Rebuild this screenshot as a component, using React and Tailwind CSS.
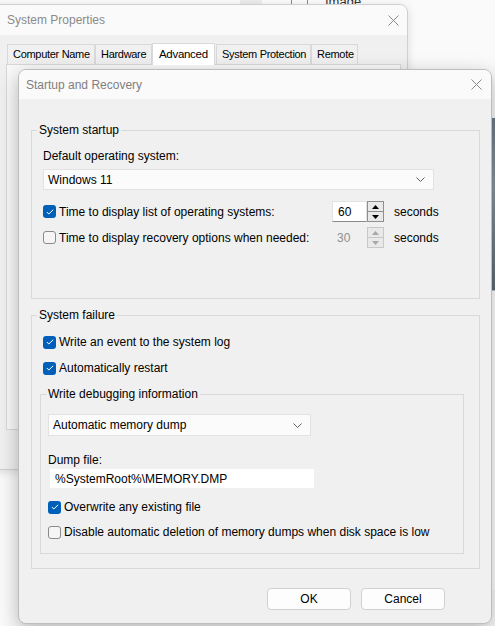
import React from "react";

function CloseX() {
  return (
    <svg width="11" height="11" viewBox="0 0 11 11" className="block">
      <path d="M0.5 0.5 L10.5 10.5 M10.5 0.5 L0.5 10.5" stroke="#8a8a8a" strokeWidth="1" fill="none" />
    </svg>
  );
}

function Chevron() {
  return (
    <svg width="9" height="5" viewBox="0 0 9 5" className="block">
      <path d="M0.5 0.5 L4.5 4.5 L8.5 0.5" stroke="#5f5f5f" strokeWidth="1" fill="none" />
    </svg>
  );
}

function Checkbox({ checked }) {
  if (checked) {
    return (
      <span className="flex h-[13px] w-[13px] shrink-0 items-center justify-center rounded-[3px] bg-[#005fb8]">
        <svg width="8" height="6" viewBox="0 0 8 6">
          <path d="M0.8 3 L2.8 5 L7.2 0.8" stroke="#ffffff" strokeWidth="1" fill="none" />
        </svg>
      </span>
    );
  }
  return <span className="h-[13px] w-[13px] shrink-0 rounded-[3px] border border-[#8a8a8a] bg-[#f5f5f5]" />;
}

function CheckRow({ checked, children, className = "" }) {
  return (
    <div className={`flex h-4 items-center ${className}`}>
      <Checkbox checked={checked} />
      <span className="ml-[3px] leading-4">{children}</span>
    </div>
  );
}

function Spin({ value, disabled }) {
  const tri = disabled ? "#a8a8a8" : "#000000";
  const edge = disabled ? "border-[#c8c8c8]" : "border-[#8f8f8f]";
  return (
    <div className="flex h-[21px]">
      <div
        className={`flex w-[35px] items-center pl-[5px] ${
          disabled ? "text-[#8f8f8f]" : "border border-b-[#8a8a8a] border-[#e3e3e3] bg-white"
        }`}
      >
        {value}
      </div>
      <div className={`flex w-[17px] flex-col border ${edge} bg-[#f0f0f0]`}>
        <div className={`flex flex-1 items-center justify-center border-b ${edge} bg-[#e9e9e9]`}>
          <svg width="7" height="4" viewBox="0 0 7 4">
            <path d="M0 4 L3.5 0 L7 4 Z" fill={tri} />
          </svg>
        </div>
        <div className="flex flex-1 items-center justify-center bg-[#e9e9e9]">
          <svg width="7" height="4" viewBox="0 0 7 4">
            <path d="M0 0 L3.5 4 L7 0 Z" fill={tri} />
          </svg>
        </div>
      </div>
    </div>
  );
}

function Group({ title, className = "", children }) {
  return (
    <div className={`relative border border-[#d9d9d9] ${className}`}>
      <span className="absolute -top-[9px] left-[5px] bg-[#f0f0f0] px-[2px] leading-4">{title}</span>
      {children}
    </div>
  );
}

function Combo({ value, className = "" }) {
  return (
    <div className={`flex items-center justify-between border border-[#e2e2e2] bg-[#fbfbfb] pl-[4px] pr-[8px] ${className}`}>
      <span>{value}</span>
      <Chevron />
    </div>
  );
}

function Tab({ width, selected, children }) {
  if (selected) {
    return (
      <div className={`relative z-10 -mb-px flex h-[22px] items-center whitespace-nowrap border border-b-0 border-[#d9d9d9] bg-white pl-[6px] text-[11.5px] tracking-[-0.3px] ${width}`}>
        {children}
      </div>
    );
  }
  return (
    <div className={`flex h-[20px] items-center whitespace-nowrap border border-b-0 border-[#d9d9d9] bg-[#f0f0f0] pl-[5px] text-[11px] tracking-[-0.3px] ${width}`}>
      {children}
    </div>
  );
}

export default function App() {
  return (
    <div className="relative h-[626px] w-[495px] overflow-hidden bg-[#fafafa] font-['Liberation_Sans',Arial,sans-serif] text-[12px] text-black">
      {/* things on the desktop behind */}
      <div className="absolute left-[240px] top-0 h-[8px] w-[22px] bg-[#ebebeb]" />
      <div className="absolute left-[291px] -top-[6px] h-[12px] w-[17px] border border-[#8a8a8a]" />
      <span className="absolute left-[325px] -top-[6px] text-[13px] leading-4 text-[#333]">Image</span>
      <div className="absolute left-[470px] top-[118px] h-[172px] w-[30px] bg-[linear-gradient(180deg,#6c7c8a,#8a96a0_40%,#5d6a75)]" />
      <div className="absolute left-[470px] top-[290px] h-[300px] w-[30px] border-t border-[#c0c0c0] bg-white" />

      {/* System Properties */}
      <div className="absolute -left-[10px] top-[4px] h-[466px] w-[418px] overflow-hidden rounded-lg border border-[#d0d0d0] bg-[#f0f0f0] shadow-[0_2px_10px_rgba(0,0,0,0.12)]">
        <div className="flex h-[30px] items-center justify-between bg-[#fafafa] pl-[16px] pr-[8px]">
          <span className="text-[#8a8a8a]">System Properties</span>
          <CloseX />
        </div>
        <div className="ml-[16px] mt-[8px] flex items-end">
          <Tab width="w-[88px]">Computer Name</Tab>
          <Tab width="w-[57px]">Hardware</Tab>
          <Tab width="w-[63px]" selected>Advanced</Tab>
          <div className="w-[1px]" />
          <Tab width="w-[95px]">System Protection</Tab>
          <Tab width="w-[47px]">Remote</Tab>
        </div>
        <div className="ml-[15px] h-[366px] w-[395px] border border-[#d9d9d9] bg-[#f9f9f9]" />
      </div>

      {/* Startup and Recovery */}
      <div className="absolute left-[18px] top-[69px] h-[555px] w-[474px] overflow-hidden rounded-lg border border-[#bdbdbd] bg-[#f0f0f0] shadow-[0_6px_20px_rgba(0,0,0,0.28)]">
        <div className="flex h-[29px] items-center justify-between bg-[#fafafa] pl-[7px] pr-[9px]">
          <span className="text-[#7f7f7f]">Startup and Recovery</span>
          <CloseX />
        </div>

        <div className="pl-[12px] pr-[11px] pt-[31px]">
          <Group title="System startup" className="h-[169px] pl-[11px] pt-[17px]">
            <div className="h-4 leading-4">Default operating system:</div>
            <Combo value="Windows 11" className="mt-[5px] h-[21px] w-[391px]" />
            <div className="mt-[11px] flex h-[21px] items-center">
              <CheckRow checked className="w-[289px]">Time to display list of operating systems:</CheckRow>
              <Spin value="60" />
              <span className="ml-[10px]">seconds</span>
            </div>
            <div className="mt-[5px] flex h-[21px] items-center">
              <CheckRow className="w-[289px]">Time to display recovery options when needed:</CheckRow>
              <Spin value="30" disabled />
              <span className="ml-[10px]">seconds</span>
            </div>
          </Group>

          <Group title="System failure" className="mt-[16px] h-[254px] pl-[11px] pt-[18px]">
            <CheckRow checked>Write an event to the system log</CheckRow>
            <CheckRow checked className="mt-[10px]">Automatically restart</CheckRow>

            <Group title="Write debugging information" className="-ml-[3px] mt-[18px] h-[160px] w-[424px] pl-[7px] pt-[19px]">
              <Combo value="Automatic memory dump" className="h-[22px] w-[263px]" />
              <div className="mt-[16px] h-4 leading-4">Dump file:</div>
              <div className="ml-[2px] mt-[1px] flex h-[19px] w-[264px] items-center bg-white pl-[5px]">
                %SystemRoot%\MEMORY.DMP
              </div>
              <CheckRow checked className="mt-[11px]">Overwrite any existing file</CheckRow>
              <CheckRow className="mt-[9px]">Disable automatic deletion of memory dumps when disk space is low</CheckRow>
            </Group>
          </Group>

          <div className="mt-[19px] flex justify-end gap-[10px] pr-[35px]">
            <button className="h-[22px] w-[84px] rounded-[4px] border border-[#d0d0d0] bg-[#fdfdfd]">OK</button>
            <button className="h-[22px] w-[84px] rounded-[4px] border border-[#d0d0d0] bg-[#fdfdfd]">Cancel</button>
          </div>
        </div>
      </div>
    </div>
  );
}
